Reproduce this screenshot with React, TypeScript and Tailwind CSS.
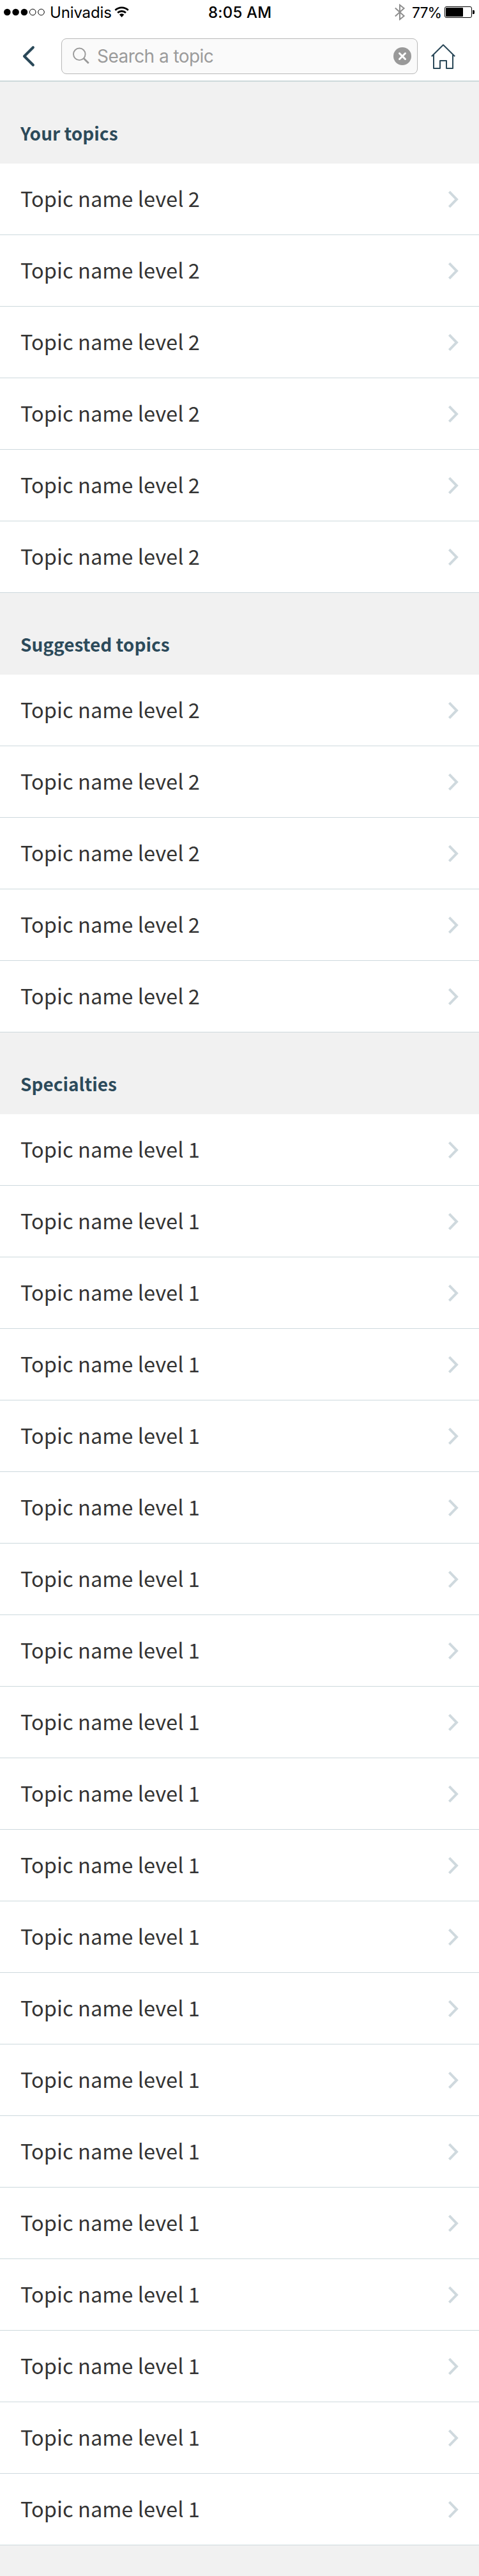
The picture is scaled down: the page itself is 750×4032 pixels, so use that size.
const sections = [
  { title: "Your topics", label: "Topic name level 2", count: 6 },
  { title: "Suggested topics", label: "Topic name level 2", count: 5 },
  { title: "Specialties", label: "Topic name level 1", count: 20 },
];

function StatusBar() {
  return (
    <div className="flex h-10 items-start font-['Inter',sans-serif] text-black">
      {/* Carrier */}
      <div className="flex h-[38px] w-[326px] items-center pl-[6px]">
        <svg width="64" height="12" viewBox="0 0 64 12" className="shrink-0">
          <circle cx="5.3" cy="6" r="5.3" />
          <circle cx="18.6" cy="6" r="5.3" />
          <circle cx="31.9" cy="6" r="5.3" />
          <circle cx="45.2" cy="6" r="4.8" fill="none" stroke="#000" strokeWidth="1" />
          <circle cx="58.5" cy="6" r="4.8" fill="none" stroke="#000" strokeWidth="1" />
        </svg>
        <span className="ml-[8px] w-[101px] whitespace-nowrap pt-[2px] text-[24px] leading-[36px] tracking-[-0.15px]">Univadis</span>
        <svg width="24" height="20" viewBox="0 0 24 20" className="shrink-0">
          <path d="M1.4 7a14.6 14.6 0 0 1 20.4 0" fill="none" stroke="#000" strokeWidth="2.8" />
          <path d="M5.2 11.1a9.2 9.2 0 0 1 12.8 0" fill="none" stroke="#000" strokeWidth="2.8" />
          <path d="M7.8 13.8a5.4 5.4 0 0 1 7.6 0L11.6 18z" />
        </svg>
      </div>

      <span className="w-[99px] whitespace-nowrap pt-px text-[24px] font-medium leading-[38px] tracking-[0.2px]">8:05 AM</span>

      {/* Bluetooth and battery */}
      <div className="flex h-[38px] flex-1 items-center pl-[193px]">
        <svg width="17" height="26" viewBox="0 0 17 26" fill="none" stroke="#8e8e8e" strokeWidth="2" className="shrink-0">
          <path d="M.8 6.5 14.6 19 8 24.4V1.8L14.6 7 .8 19.5" />
        </svg>
        <span className="ml-[10px] w-[50px] whitespace-nowrap pt-[2px] text-[23px] leading-[36px] tracking-[-1px]">77%</span>
        <svg width="48" height="18" viewBox="0 0 48 18" className="ml-px shrink-0">
          <rect x=".5" y=".5" width="42" height="17" rx="2.5" fill="none" stroke="#000" />
          <rect x="2" y="2" width="27" height="14" rx="1" />
          <path d="M44 6h1.6a1.4 1.4 0 0 1 1.4 1.4v3.2a1.4 1.4 0 0 1-1.4 1.4H44z" />
        </svg>
      </div>
    </div>
  );
}

function SearchBar() {
  return (
    <div className="flex h-[86px] items-start pt-5">
      <button className="flex h-14 w-24 items-center pl-[35px]">
        <svg width="20" height="34" viewBox="0 0 20 34" fill="none" stroke="#2a4858" strokeWidth="4.2" strokeLinecap="round" strokeLinejoin="round">
          <path d="M16.8 3.3 3 17l13.800 13.7" />
        </svg>
      </button>

      <div className="flex h-14 w-[558px] items-center rounded-lg border border-[#b8b8b8] bg-[#fafafa] pr-[9px] pl-[17px]">
        <svg width="26" height="26" viewBox="0 0 26 26" fill="none" stroke="#999" className="mb-[2px] shrink-0">
          <circle cx="10.3" cy="10.8" r="9.3" strokeWidth="1.9" />
          <path d="m17.2 17.5 7.6 7.4" strokeWidth="2.8" />
        </svg>
        <span className="ml-[12px] flex-1 whitespace-nowrap font-['Inter',sans-serif] text-[28px] leading-[54px] tracking-[-0.55px] text-[#9b9b9b]">
          Search a topic
        </span>
        <svg width="28" height="28" viewBox="0 0 28 28" className="shrink-0">
          <circle cx="14" cy="14" r="14" fill="#999" />
          <path d="m9.500 9.500 9 9M18.500 9.500l-9 9" stroke="#fff" strokeWidth="3" strokeLinecap="round" />
        </svg>
      </div>

      <button className="flex h-14 flex-1 items-center pl-[21px]">
        <svg width="38" height="40" viewBox="0 0 38 40" fill="none" stroke="#2a4858" strokeWidth="2" strokeLinejoin="round">
          <path d="M.8 20.300 19 2.200 37.200 20.300" />
          <path d="M4 17v22h10V27h10v12h10V17" />
        </svg>
      </button>
    </div>
  );
}

function TopicRow({ label }: { label: string }) {
  return (
    <li className="flex h-28 items-center justify-between border-b border-[#cdd9dd] bg-white px-8">
      <span className="pb-1 text-[32.5px] leading-[49px] tracking-[0.05px] text-[#333]">{label}</span>
      <svg width="17" height="28" viewBox="0 0 17 28" fill="none" stroke="#cfd9de" strokeWidth="4" className="mt-px">
        <path d="M2.4 2.2 14 14 2.4 25.800" />
      </svg>
    </li>
  );
}

export default function App() {
  return (
    <main className="min-h-[4032px] w-[750px] bg-[#f1f1f1] font-['Noto_Sans_CJK_SC',sans-serif]">
      <header className="h-32 border-b-2 border-[#cdd9db] bg-white">
        <StatusBar />
        <SearchBar />
      </header>

      {sections.map((section) => (
        <section key={section.title}>
          <h2 className="flex h-32 items-end px-8 pb-[27px] text-[28px] font-bold leading-[42px] text-[#2c4a5a]">
            {section.title}
          </h2>
          <ul>
            {Array.from({ length: section.count }, (_, i) => (
              <TopicRow key={i} label={section.label} />
            ))}
          </ul>
        </section>
      ))}
    </main>
  );
}
